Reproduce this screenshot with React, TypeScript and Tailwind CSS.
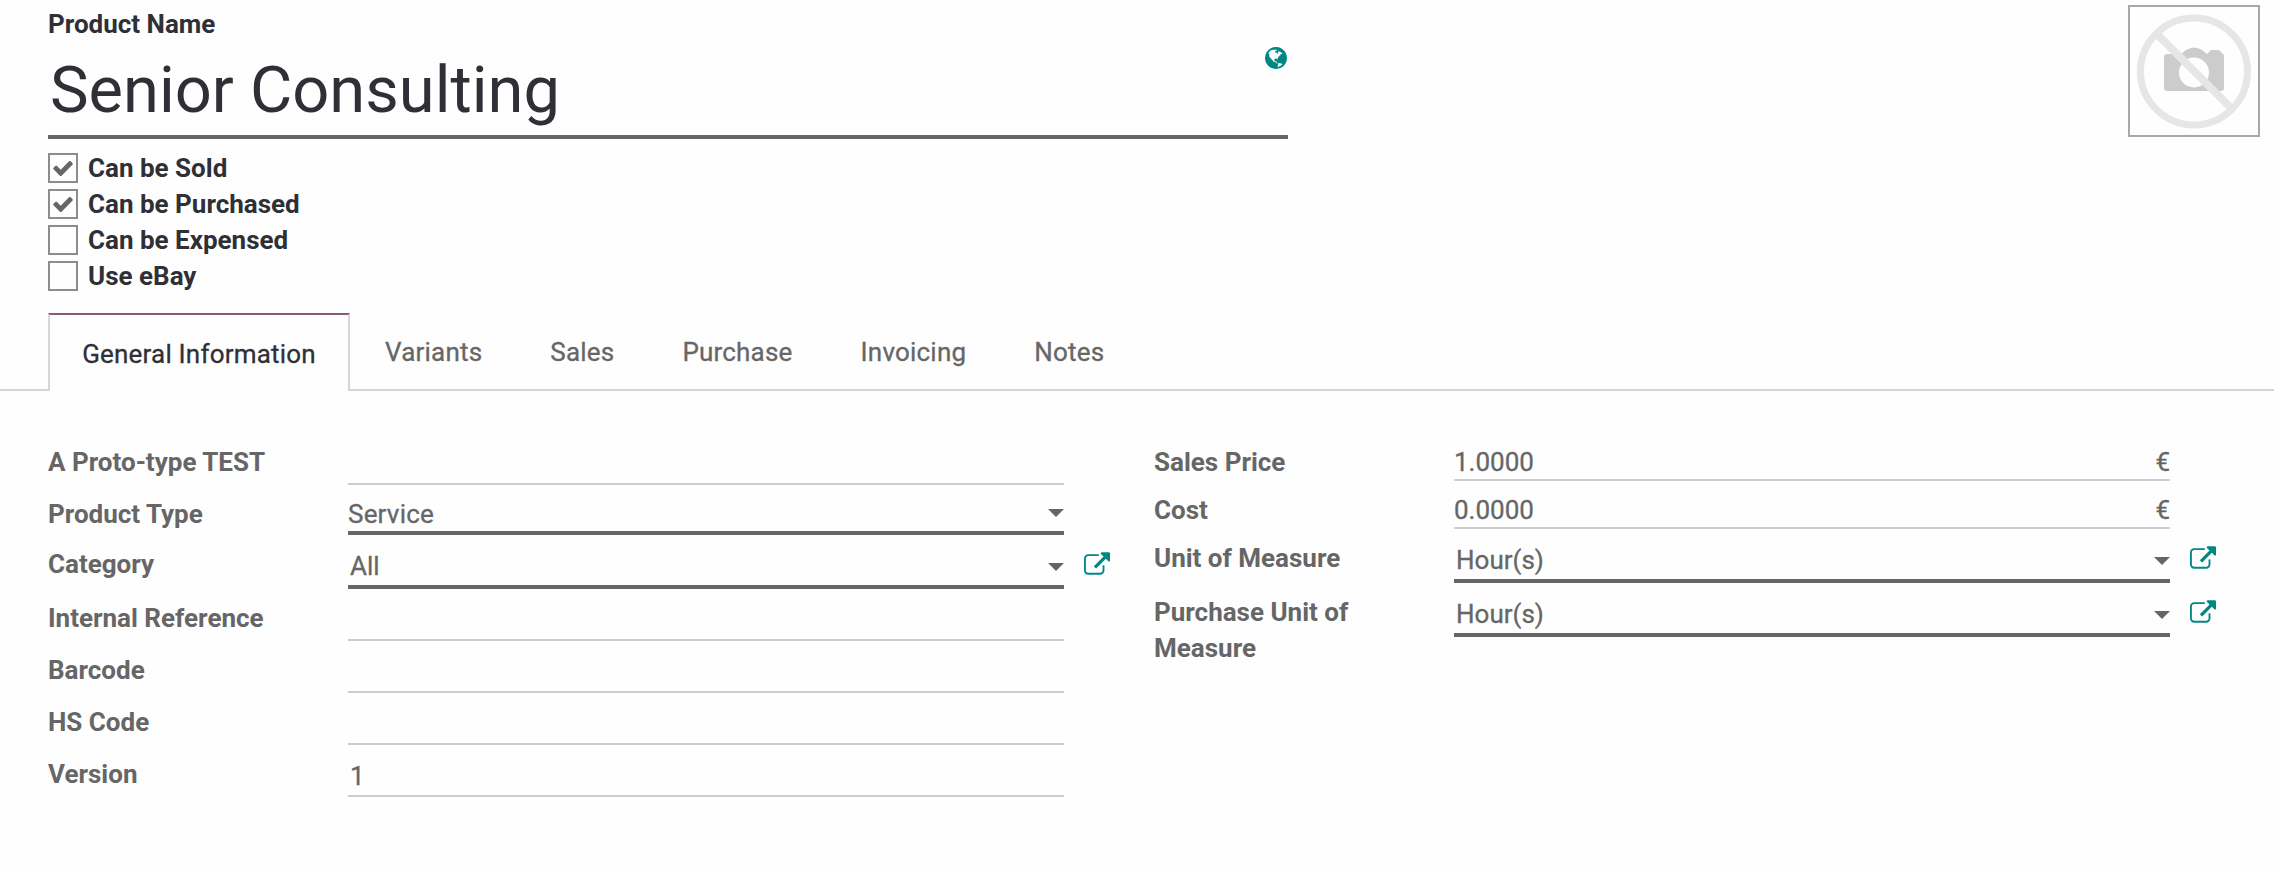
import React from "react";

const GLOBE =
  "M768 0q209 0 385.5 103t279.5 279.5 103 385.5-103 385.5-279.5 279.5-385.5 103-385.5-103-279.5-279.5-103-385.5 103-385.5 279.5-279.5 385.5-103zm274 521q-2 1-9.5 9.5t-13.5 9.5q2 0 4.5-5t5-11 3.5-7q6-7 22-15 14-6 52-12 34-8 51 11-2-2 9.5-13t14.5-12q3-2 15-4.5t15-7.5l2-22q-12 1-17.5-7t-6.5-21q0 2-6 8 0-7-4.5-8t-11.5 1-9 1q-10-3-15-7.5t-8-16.5-4-15q-2-5-9.5-11t-9.5-10q-1-2-2.5-5.5t-3-6.5-4-5.5-5.5-2.5-7 5-7.5 10-4.5 5q-3-2-6-1.5t-4.5 1-4.5 3-5 3.5q-3 2-8.5 3t-8.5 2q15-5-1-11-10-4-16-3 9-4 7.5-12t-8.5-14h5q-1-4-8.5-8.5t-17.5-8.5-13-6q-8-5-34-9.5t-33-.5q-5 6-4.5 10.5t4 14 3.5 12.5q1 6-5.5 13t-6.5 12q0 7 14 15.5t10 21.5q-3 8-16 16t-16 12q-5 8-1.5 18.5t10.5 16.5q2 2 1.5 4t-3.5 4.5-5.5 4-6.5 3.5l-3 2q-11 5-20.5-6t-13.5-26q-7-25-16-30-23-8-29 1-5-13-41-26-25-9-58-4 6-1 0-15-7-15-19-12 3-6 4-17.5t1-13.5q3-13 12-23 1-1 7-8.5t9.5-13.5.5-6q35 4 50-11 5-5 11.5-17t10.5-17q9-6 14-5.5t14.5 5.5 14.5 5q14 1 15.5-11t-7.5-20q12 1 3-17-4-7-8-9-12-4-27 5-8 4 2 8-1-1-9.5 10.5t-16.5 17.5-16-5q-1-1-5.5-13.5t-9.5-13.5q-8 0-16 15 3-8-11-15t-24-8q19-12-8-27-7-4-20.5-5t-19.5 4q-5 7-5.5 11.5t5 8 10.5 5.5 11.5 4 8.5 3q14 10 8 14-2 1-8.5 3.5t-11.5 4.5-6 4q-3 4 0 14t-2 14q-5-5-9-17.5t-7-16.5q7 9-25 6l-10-1q-4 0-16 2t-20.5 1-13.5-8q-4-8 0-20 1-4 4-2-4-3-11-9.5t-10-8.5q-46 15-94 41 6 1 12-1 5-2 13-6.5t10-5.5q34-14 42-7l5-5q14 16 20 25-7-4-30-1-20 6-22 12 7 12 5 18-4-3-11.5-10t-14.5-11-15-5q-16 0-22 1-146 80-235 222 7 7 12 8 4 1 5 9t2.5 11 11.5-3q9 8 3 19 1-1 44 27 19 17 21 21 3 11-10 18-1-2-9-9t-9-4q-3 5 .5 18.5t10.5 12.5q-7 0-9.5 16t-2.5 35.5-1 23.5l2 1q-3 12 5.5 34.5t21.5 19.5q-13 3 20 43 6 8 8 9 3 2 12 7.5t15 10 10 10.5q4 5 10 22.5t14 23.5q-2 6 9.5 20t10.5 23q-1 0-2.5 1t-2.5 1q3 7 15.5 14t15.5 13q1 3 2 10t3 11 8 2q2-20-24-62-15-25-17-29-3-5-5.5-15.5t-4.5-14.5q2 0 6 1.5t8.5 3.5 7.5 4 2 3q-3 7 2 17.5t12 18.5 17 19 12 13q6 6 14 19.5t0 13.5q9 0 20 10.5t17 19.5q5 8 8 26t5 24q2 7 8.5 13.5t12.5 9.5l16 8 13 7q5 2 18.5 10.5t21.5 11.5q10 4 16 4t14.5-2.5 13.5-3.5q15-2 29 15t21 21q36 19 55 11-2 1 .5 7.5t8 15.5 9 14.5 5.5 8.5q5 6 18 15t18 15q6-4 7-9-3 8 7 20t18 10q14-3 14-32-31 15-49-18 0-1-2.5-5.5t-4-8.5-2.5-8.5 0-7.5 5-3q9 0 10-3.5t-2-12.5-4-13q-1-8-11-20t-12-15q-5 9-16 8t-16-9q0 1-1.5 5.5t-1.5 6.5q-13 0-15-1 1-3 2.5-17.5t3.5-22.5q1-4 5.5-12t7.5-14.5 4-12.5-4.5-9.5-17.5-2.5q-19 1-26 20-1 3-3 10.5t-5 11.5-9 7q-7 3-24 2t-24-5q-13-8-22.5-29t-9.5-37q0-10 2.5-26.5t3-25-5.5-24.5q3-2 9-9.5t10-10.5q2-1 4.5-1.5t4.5 0 4-1.5 3-6q-1-1-4-3-3-3-4-3 7 3 28.5-1.5t27.5 1.5q15 11 22-2 0-1-2.5-9.5t-.5-13.5q5 27 29 9 3 3 15.5 5t17.5 5q3 2 7 5.5t5.5 4.5 5-.5 8.5-6.5q10 14 12 24 11 40 19 44 7 3 11 2t4.5-9.5 0-14-1.5-12.5l-1-8v-18l-1-8q-15-3-18.5-12t1.5-18.5 15-18.5q1-1 8-3.5t15.5-6.5 12.5-8q21-19 15-35 7 0 11-9-1 0-5-3t-7.5-5-4.5-2q9-5 2-16 5-3 7.5-11t7.5-10q9 12 21 2 8-8 1-16 5-7 20.5-10.5t18.5-9.5q7 2 8-2t1-12 3-12q4-5 15-9t13-5l17-11q3-4 0-4 18 2 31-11 10-11-6-20 3-6-3-9.5t-15-5.5q3-1 11.5-.5t10.5-1.5q15-10-7-16-17-5-43 12zm-163 877q206-36 351-189-3-3-12.5-4.5t-12.5-3.5q-18-7-24-8 1-7-2.5-13t-8-9-12.5-8-11-7q-2-2-7-6t-7-5.5-7.5-4.5-8.5-2-10 1l-3 1q-3 1-5.5 2.5t-5.5 3-4 3 0 2.5q-21-17-36-22-5-1-11-5.5t-10.5-7-10-1.5-11.5 7q-5 5-6 15t-2 13q-7-5 0-17.5t2-18.5q-3-6-10.5-4.5t-12 4.5-11.5 8.5-9 6.5-8.5 5.5-8.5 7.5q-3 4-6 12t-5 11q-2-4-11.5-6.5t-9.5-5.5q2 10 4 35t5 38q7 31-12 48-27 25-29 40-4 22 12 26 0 7-8 20.5t-7 21.5q0 6 2 16z";

const EXTERNAL =
  "M1408 928v320q0 119-84.5 203.5t-203.5 84.5h-832q-119 0-203.5-84.5t-84.5-203.5v-832q0-119 84.5-203.5t203.5-84.5h704q14 0 23 9t9 23v64q0 14-9 23t-23 9h-704q-66 0-113 47t-47 113v832q0 66 47 113t113 47h832q66 0 113-47t47-113v-320q0-14 9-23t23-9h64q14 0 23 9t9 23zm384-864v512q0 26-19 45t-45 19-45-19l-176-176-652 652q-10 10-23 10t-23-10l-114-114q-10-10-10-23t10-23l652-652-176-176q-19-19-19-45t19-45 45-19h512q26 0 45 19t19 45z";

const CHECK =
  "M1671 566q0 40-28 68l-724 724-136 136q-28 28-68 28t-68-28l-136-136-362-362q-28-28-28-68t28-68l136-136q28-28 68-28t68 28l294 295 656-657q28-28 68-28t68 28l136 136q28 28 28 68z";

function CheckRow({ label, checked = false }: { label: string; checked?: boolean }) {
  return (
    <label className="flex h-9 items-start text-[#2f3036]">
      <span className="mt-[3px] flex size-[30px] shrink-0 items-center justify-center border-2 border-[#8c8c8c]">
        {checked && (
          <svg viewBox="121 334 1550 1188" className="h-[15px] w-5 fill-[#666]">
            <path d={CHECK} />
          </svg>
        )}
      </span>
      <span className="ml-[10px] font-bold">{label}</span>
    </label>
  );
}

type FieldProps = {
  label: string;
  value?: string;
  row: string;
  box: string;
  kind?: "input" | "select";
  inset?: string;
  suffix?: string;
  link?: boolean;
};

function Field({ label, value, row, box, kind = "input", inset = "", suffix, link }: FieldProps) {
  const border = kind === "select" ? "border-b-4 border-[#666]" : "border-b-2 border-[#ccc]";
  return (
    <div className={`flex items-start ${row}`}>
      <div className="w-[300px] shrink-0 pr-20 font-bold">{label}</div>
      <div
        className={`flex w-[716px] shrink-0 items-start justify-between [-webkit-text-stroke:0.3px] ${border} ${box}`}
      >
        <span className={inset}>{value}</span>
        {suffix && <span>{suffix}</span>}
        {kind === "select" && (
          <svg viewBox="0 0 16 8" className={`h-2 w-4 fill-[#666] ${link ? "mt-[17px]" : "mt-[13px]"}`}>
            <path d="M0 0H16L8 8Z" />
          </svg>
        )}
      </div>
      {link && (
        <svg viewBox="0 0 1792 1536" className="mt-[6px] ml-5 h-[23px] w-[26px] shrink-0 fill-[#008784]">
          <path d={EXTERNAL} />
        </svg>
      )}
    </div>
  );
}

export default function App() {
  return (
    <div className="h-[870px] w-[2274px] overflow-hidden bg-[#fefefe] font-['Roboto',sans-serif] text-[26px] leading-9 text-[#666]">
      <header className="flex h-[313px] justify-between pr-[14px] pl-12">
        <div className="w-[1240px] pt-[6px] text-[#2f3036]">
          <div className="font-bold">Product Name</div>
          <div className="flex h-[97px] justify-between border-b-4 border-[#666]">
            <h1 className="pl-[2px] text-[65px] leading-[97px] font-normal">Senior Consulting</h1>
            <svg viewBox="0 0 1536 1536" className="mt-[5px] mr-px size-[22px] fill-[#008784]">
              <path d={GLOBE} />
            </svg>
          </div>
          <div className="pt-[11px]">
            <CheckRow label="Can be Sold" checked />
            <CheckRow label="Can be Purchased" checked />
            <CheckRow label="Can be Expensed" />
            <CheckRow label="Use eBay" />
          </div>
        </div>
        <div className="mt-[5px] size-[132px] border-2 border-[#a8a8a8]">
          <svg viewBox="2130 7 128 128" className="size-32">
            <path
              fill="#ccc"
              fillRule="evenodd"
              d="M2167 54H2181L2186 50Q2194 45 2202 50L2207 54L2211 50H2219L2224 55V88Q2224 91 2221 91H2167Q2164 91 2164 88V57Q2164 54 2167 54ZM2194 57.500A15 15 0 1 0 2194 87.500A15 15 0 1 0 2194 57.500Z"
            />
            <circle cx="2194" cy="71.500" r="53.500" fill="none" stroke="#e6e6e6" strokeWidth="7" />
            <path d="M2157 34L2232 109" stroke="#e6e6e6" strokeWidth="8" />
          </svg>
        </div>
      </header>

      <nav className="flex h-[78px] tracking-[0.2px] [-webkit-text-stroke:0.3px]">
        <div className="w-12 border-b-2 border-[#d6d6d6]" />
        <div className="w-[302px] border-x-2 border-t-2 border-x-[#d6d6d6] border-t-[#875a7b] pt-[21px] text-center text-[#2f3036]">
          General Information
        </div>
        <div className="flex flex-1 gap-[68px] border-b-2 border-[#d6d6d6] pt-[21px] pl-[35px]">
          <span>Variants</span>
          <span>Sales</span>
          <span>Purchase</span>
          <span>Invoicing</span>
          <span>Notes</span>
        </div>
      </nav>

      <main className="flex pt-[53px] pl-12">
        <section className="w-[1106px]">
          <Field label="A Proto-type TEST" row="h-[52px]" box="h-[41px]" />
          <Field
            label="Product Type"
            value="Service"
            kind="select"
            row="h-[50px]"
            box="h-[39px]"
            inset="tracking-[0.2px]"
          />
          <Field label="Category" value="All" kind="select" link row="h-[54px]" box="h-[43px]" inset="pt-[2px] pl-[2px]" />
          <Field label="Internal Reference" row="h-[52px]" box="h-[41px]" />
          <Field label="Barcode" row="h-[52px]" box="h-[41px]" />
          <Field label="HS Code" row="h-[52px]" box="h-[41px]" />
          <Field label="Version" value="1" row="h-[52px]" box="h-[41px]" inset="pt-[2px] pl-[2px]" />
        </section>
        <section>
          <Field label="Sales Price" value="1.0000" suffix="€" row="h-12" box="h-[37px]" />
          <Field label="Cost" value="0.0000" suffix="€" row="h-12" box="h-[37px]" />
          <Field label="Unit of Measure" value="Hour(s)" kind="select" link row="h-[54px]" box="h-[43px]" inset="pt-[2px] pl-[2px]" />
          <Field label="Purchase Unit of Measure" value="Hour(s)" kind="select" link row="h-[72px]" box="h-[43px]" inset="pt-[2px] pl-[2px]" />
        </section>
      </main>
    </div>
  );
}
